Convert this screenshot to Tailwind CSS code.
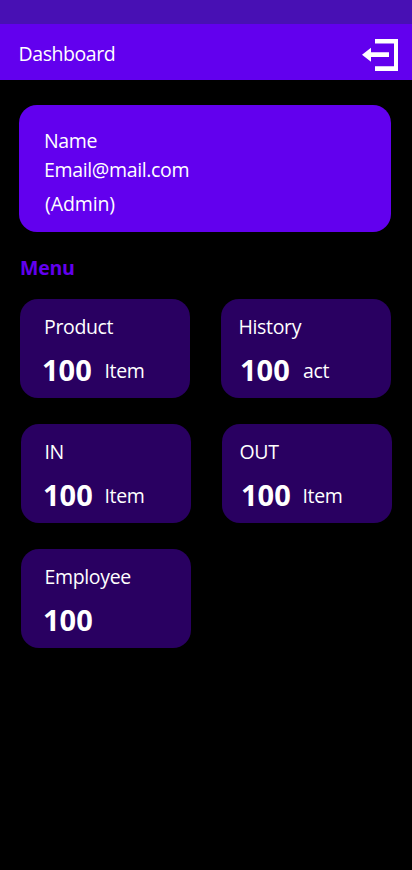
<!DOCTYPE html>
<html lang="en">
<head>
<meta charset="utf-8">
<meta name="viewport" content="width=device-width, initial-scale=1">
<title>Dashboard</title>
<script src="https://cdn.jsdelivr.net/npm/@tailwindcss/browser@4"></script>
</head>
<body class="bg-black">
<div class="w-[412px] h-[870px] overflow-hidden bg-black text-white font-['Open_Sans',sans-serif] [font-feature-settings:'ss02'] text-[19.5px] tracking-[-0.35px] leading-7 whitespace-nowrap">
  <div class="h-6 bg-[#4810b4]"></div>
  <header class="h-14 bg-[#6200ee] flex items-start justify-between pl-[18.6px] pr-[14px]">
    <h1 class="mt-4 tracking-[-0.45px]">Dashboard</h1>
    <svg class="mt-[15px]" width="36" height="32" viewBox="0 0 36 32" fill="#fff"><path d="M13 0H36V32H13V27.3H32V4.5H13Z"/><path d="M0 15.7L9 8.7V13.3H27V18H9V22.7Z"/></svg>
  </header>
  <main>
    <section class="mt-[25px] ml-[19px] w-[372px] h-[127px] rounded-[18px] bg-[#6200ee] pl-[25px] pt-[22px]">
      <p>Name</p>
      <p class="mt-px">Email@mail.com</p>
      <p class="mt-[6px] ml-px tracking-[-0.1px]">(Admin)</p>
    </section>
    <h2 class="mt-[22px] ml-5 font-bold tracking-[-0.2px] text-[#6200ee]">Menu</h2>
    <div class="mt-[17px] ml-5 flex gap-[31px]">
      <section class="w-[170px] h-[99px] rounded-[18px] bg-[#290061] pl-6 pt-[14px]">
        <p>Product</p>
        <div class="flex items-baseline mt-[11px] -ml-[2px]"><b class="w-[62.5px] text-[29px] tracking-normal leading-9">100</b><span class="relative -top-[3px]">Item</span></div>
      </section>
      <section class="w-[170px] h-[99px] rounded-[18px] bg-[#290061] pl-[17.5px] pt-[14px]">
        <p>History</p>
        <div class="flex items-baseline mt-[11px] ml-[1.5px]"><b class="w-[63px] text-[29px] tracking-normal leading-9">100</b><span class="relative -top-[3px]">act</span></div>
      </section>
    </div>
    <div class="mt-[26px] ml-[21px] flex gap-[31px]">
      <section class="w-[170px] h-[99px] rounded-[18px] bg-[#290061] pl-[23.5px] pt-[14px]">
        <p>IN</p>
        <div class="flex items-baseline mt-[11px] -ml-[1.5px]"><b class="w-[61.5px] text-[29px] tracking-normal leading-9">100</b><span class="relative -top-[3px]">Item</span></div>
      </section>
      <section class="w-[170px] h-[99px] rounded-[18px] bg-[#290061] pl-[17.5px] pt-[14px]">
        <p>OUT</p>
        <div class="flex items-baseline mt-[11px] ml-[1.5px]"><b class="w-[61.5px] text-[29px] tracking-normal leading-9">100</b><span class="relative -top-[3px]">Item</span></div>
      </section>
    </div>
    <section class="mt-[26px] ml-[21px] w-[170px] h-[99px] rounded-[18px] bg-[#290061] pl-[23.5px] pt-[14px]">
      <p>Employee</p>
      <div class="mt-[11px] -ml-[1.5px]"><b class="text-[29px] tracking-normal leading-9">100</b></div>
    </section>
  </main>
</div>
</body>
</html>
